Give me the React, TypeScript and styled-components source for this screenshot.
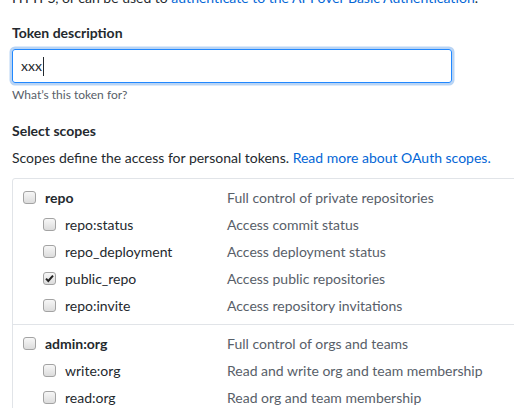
import React from "react";
import styled, { createGlobalStyle } from "styled-components";

const GlobalStyle = createGlobalStyle`
  html, body { margin: 0; padding: 0; overflow: hidden; background: #fff; }
  body {
    font-family: Lato, "Liberation Sans", sans-serif;
    font-size: 14px;
    color: #24292e;
  }
`;

const Page = styled.div`
  padding: 0 0 0 12px;
  width: 600px;
`;

const Intro = styled.p`
  margin: -13px 0 0;
  line-height: 21px;
  white-space: nowrap;
`;

const Link = styled.a`
  color: #0366d6;
  text-decoration: none;
`;

const FieldLabel = styled.label`
  display: block;
  margin-top: 15px;
  font-weight: 700;
  line-height: 20px;
`;

const TextField = styled.div`
  box-sizing: border-box;
  margin-top: 6px;
  width: 440px;
  height: 34px;
  padding: 0 8px;
  display: flex;
  align-items: center;
  border: 1px solid #2188ff;
  border-radius: 3px;
  box-shadow: 0 0 0 2.5px rgba(3, 102, 214, 0.28);
  line-height: 20px;
  color: #24292e;
`;

const Caret = styled.span`
  display: inline-block;
  width: 1px;
  height: 19px;
  margin-left: 1px;
  background: #24292e;
`;

const Note = styled.p`
  margin: 3px 0 0;
  font-size: 12px;
  line-height: 18px;
  color: #586069;
`;

const Heading = styled.h3`
  margin: 17px 0 0;
  font-size: 14px;
  font-weight: 700;
  line-height: 20px;
`;

const Lead = styled.p`
  margin: 6px 0 0;
  line-height: 21px;
  white-space: nowrap;
`;

const ScopeBox = styled.div`
  margin-top: 10px;
  border: 1px solid #e1e4e8;
  border-radius: 3px;
`;

const ScopeGroup = styled.div`
  padding: 5px 0;
  & + & {
    border-top: 1px solid #e1e4e8;
  }
`;

const ScopeRow = styled.div`
  display: grid;
  grid-template-columns: 214px 1fr;
  align-items: center;
  height: 27px;
  line-height: 20px;
  white-space: nowrap;
`;

const ScopeName = styled.div<{ $sub?: boolean; $parent?: boolean }>`
  display: flex;
  align-items: center;
  gap: 9px;
  padding-left: ${(p) => (p.$sub ? 30 : 10)}px;
  font-weight: ${(p) => (p.$parent ? 700 : 400)};
  color: #24292e;
`;

const Box = styled.span`
  box-sizing: border-box;
  display: inline-flex;
  align-items: center;
  justify-content: center;
  width: 13px;
  height: 13px;
  border: 1px solid #a3a3a3;
  border-radius: 3px;
  background: linear-gradient(#f7f7f7, #dcdcdc);
  margin-top: -1px;
`;

const Desc = styled.div`
  color: #586069;
`;

function Check({ checked }: { checked?: boolean }) {
  return (
    <Box role="checkbox" aria-checked={!!checked}>
      {checked && (
        <svg width="11" height="11" viewBox="0 0 11 11">
          <path d="M2 5.6 L4.3 8 L9 2.6" fill="none" stroke="#222" strokeWidth="2" />
        </svg>
      )}
    </Box>
  );
}

type Scope = { name: string; desc: string; sub?: boolean; checked?: boolean };

const groups: Scope[][] = [
  [
    { name: "repo", desc: "Full control of private repositories" },
    { name: "repo:status", desc: "Access commit status", sub: true },
    { name: "repo_deployment", desc: "Access deployment status", sub: true },
    { name: "public_repo", desc: "Access public repositories", sub: true, checked: true },
    { name: "repo:invite", desc: "Access repository invitations", sub: true },
  ],
  [
    { name: "admin:org", desc: "Full control of orgs and teams" },
    { name: "write:org", desc: "Read and write org and team membership", sub: true },
    { name: "read:org", desc: "Read org and team membership", sub: true },
  ],
];

export default function App() {
  return (
    <>
      <GlobalStyle />
      <Page>
        <Intro>
          HTTPS, or can be used to <Link href="#">authenticate to the API over Basic Authentication</Link>.
        </Intro>
        <FieldLabel>Token description</FieldLabel>
        <TextField role="textbox">
          xxx
          <Caret />
        </TextField>
        <Note>What’s this token for?</Note>
        <Heading>Select scopes</Heading>
        <Lead>
          Scopes define the access for personal tokens. <Link href="#">Read more about OAuth scopes.</Link>
        </Lead>
        <ScopeBox>
          {groups.map((g, i) => (
            <ScopeGroup key={i}>
              {g.map((s) => (
                <ScopeRow key={s.name}>
                  <ScopeName $sub={s.sub} $parent={!s.sub}>
                    <Check checked={s.checked} />
                    {s.name}
                  </ScopeName>
                  <Desc>{s.desc}</Desc>
                </ScopeRow>
              ))}
            </ScopeGroup>
          ))}
        </ScopeBox>
      </Page>
    </>
  );
}
